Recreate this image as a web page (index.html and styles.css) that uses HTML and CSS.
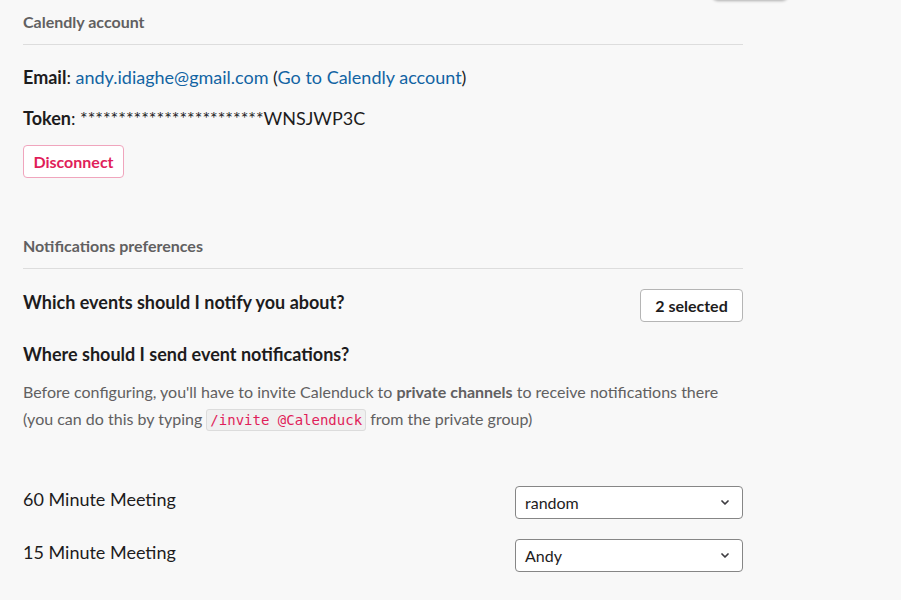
FILE: index.html
```html
<!DOCTYPE html>
<html lang="en">
<head>
<meta charset="utf-8">
<title>Calenduck settings</title>
<link rel="stylesheet" href="styles.css">
</head>
<body>
<div class="floating-tab"></div>
<main class="page">
  <section class="section">
    <h2 class="section-title">Calendly account</h2>
    <p class="info-line"><b>Email</b>: <a href="#" class="link">andy.idiaghe@gmail.com</a> (<a href="#" class="link">Go to Calendly account</a>)</p>
    <p class="info-line"><b>Token</b>: ************************WNSJWP3C</p>
    <button class="btn btn-danger">Disconnect</button>
  </section>

  <section class="section section-notif">
    <h2 class="section-title">Notifications preferences</h2>
    <div class="row-head">
      <h3 class="question q1">Which events should I notify you about?</h3>
      <button class="btn btn-plain">2 selected</button>
    </div>
    <h3 class="question q2">Where should I send event notifications?</h3>
    <p class="help">Before configuring, you'll have to invite Calenduck to <b>private channels</b> to receive notifications there<br>(you can do this by typing <code class="code">/invite @Calenduck</code> from the private group)</p>

    <div class="meetings">
      <div class="meeting">
        <span class="meeting-name">60 Minute Meeting</span>
        <div class="select"><span>random</span><svg class="chev" viewBox="0 0 8 5" width="8" height="5"><path d="M1 1 L4 4 L7 1" fill="none" stroke="#3d3c40" stroke-width="1.7" stroke-linecap="round" stroke-linejoin="round"/></svg></div>
      </div>
      <div class="meeting">
        <span class="meeting-name">15 Minute Meeting</span>
        <div class="select"><span>Andy</span><svg class="chev" viewBox="0 0 8 5" width="8" height="5"><path d="M1 1 L4 4 L7 1" fill="none" stroke="#3d3c40" stroke-width="1.7" stroke-linecap="round" stroke-linejoin="round"/></svg></div>
      </div>
    </div>
  </section>
</main>
</body>
</html>
```
FILE: styles.css
```css
* { box-sizing: border-box; }
html, body { margin: 0; padding: 0; }
body {
  background: #f8f8f8;
  font-family: Lato, "Noto Sans", sans-serif;
  color: #1d1c1d;
  width: 901px;
  height: 600px;
  overflow: hidden;
  position: relative;
}
.floating-tab {
  position: absolute;
  left: 712px;
  top: -30px;
  width: 76px;
  height: 30px;
  background: #f8f8f8;
  border-radius: 6px;
  box-shadow: 0 1px 3px rgba(0,0,0,0.3);
}
.page {
  width: 720px;
  margin-left: 23px;
  padding-top: 12px;
}
.section-title {
  margin: 0;
  font-size: 16px;
  font-weight: 700;
  color: #616061;
  line-height: 20px;
  padding-bottom: 12px;
  border-bottom: 1px solid #dddddd;
}
.info-line {
  margin: 0;
  font-size: 18px;
  line-height: 24px;
}
.section-title + .info-line { margin-top: 20px; }
.info-line + .info-line { margin-top: 17px; }
.info-line b { font-weight: 700; }
.link { color: #1264a3; text-decoration: none; }
.btn {
  font-family: Lato, "Noto Sans", sans-serif;
  font-size: 16px;
  font-weight: 700;
  height: 33px;
  border-radius: 4px;
  background: #ffffff;
  cursor: pointer;
  display: block;
}
.btn-danger {
  margin-top: 15px;
  width: 101px;
  color: #e01e5a;
  border: 1px solid #f0a5bd;
  padding: 0;
}
.btn-plain {
  width: 103px;
  color: #1d1c1d;
  border: 1px solid #b5b5b5;
  padding: 0;
}
.section-notif { margin-top: 58px; }
.row-head {
  display: flex;
  align-items: flex-start;
  justify-content: space-between;
  margin-top: 20px;
}
.question {
  margin: 0;
  font-size: 18px;
  font-weight: 700;
  line-height: 24px;
}
.q1 { padding-top: 1px; }
.q2 { margin-top: 20px; }
.help {
  margin: 12px 0 0;
  font-size: 16px;
  line-height: 27px;
  color: #616061;
}
.help b { font-weight: 700; }
.code {
  font-family: "DejaVu Sans Mono", "Liberation Mono", monospace;
  font-size: 14px;
  color: #e01e5a;
  background: #f0f0f0;
  border: 1px solid #dcdcdc;
  border-radius: 3px;
  padding: 2px 3px;
}
.meetings {
  margin-top: 52px;
  display: flex;
  flex-direction: column;
  gap: 20px;
}
.meeting {
  display: flex;
  justify-content: space-between;
  align-items: flex-start;
}
.meeting-name {
  font-size: 18px;
  line-height: 24px;
  padding-top: 1px;
}
.select {
  width: 228px;
  height: 33px;
  background: #ffffff;
  border: 1px solid #868686;
  border-radius: 4px;
  display: flex;
  align-items: center;
  justify-content: space-between;
  padding: 0 13px 0 9px;
  font-size: 16px;
}
.chev { display: block; }
```
